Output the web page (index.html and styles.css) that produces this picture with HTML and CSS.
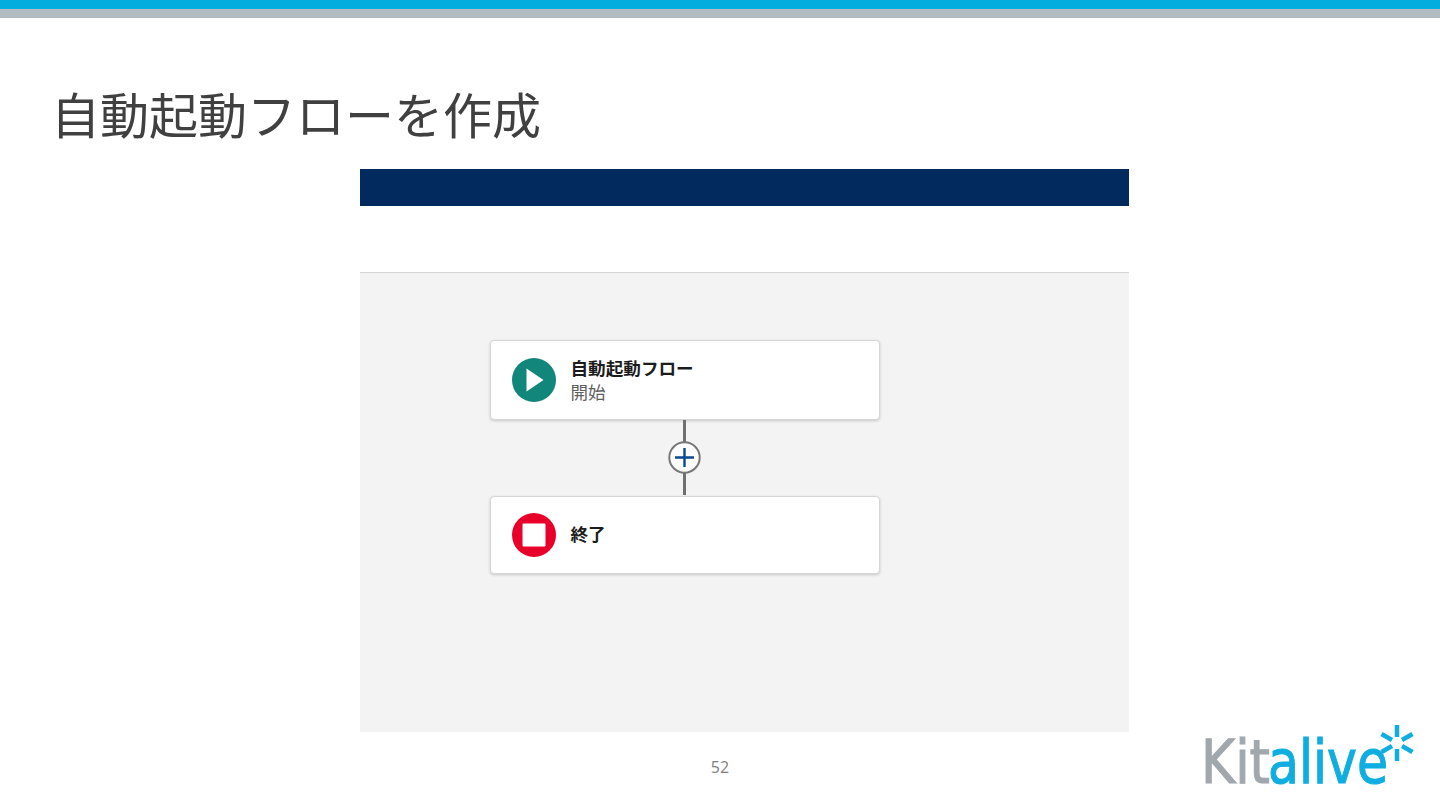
FILE: index.html
```html
<!DOCTYPE html>
<html lang="ja">
<head>
<meta charset="utf-8">
<title>自動起動フローを作成</title>
<link rel="stylesheet" href="styles.css">
</head>
<body>
<div class="slide">
  <div class="bar-blue"></div>
  <div class="bar-gray"></div>
  <h1 class="title">自動起動フローを作成</h1>
  <section class="shot">
    <div class="shot-nav"></div>
    <div class="shot-head"></div>
    <div class="canvas">
      <div class="card card-start">
        <svg class="node-icon" viewBox="0 0 44 44"><circle cx="22" cy="22" r="22" fill="#12867b"/><path d="M14.500 10.500 31.500 22 14.500 33.500z" fill="#fff"/></svg>
        <div class="card-text">
          <div class="card-name">自動起動フロー</div>
          <div class="card-sub">開始</div>
        </div>
      </div>
      <div class="connector">
        <div class="line line-top"></div>
        <svg class="add" viewBox="0 0 33 33"><circle cx="16.500" cy="16.500" r="15.200" fill="#fff" stroke="#777" stroke-width="2"/><path d="M7 16.500h19M16.500 7v19" stroke="#0b4a8f" stroke-width="2.400" fill="none"/></svg>
        <div class="line line-bottom"></div>
      </div>
      <div class="card card-end">
        <svg class="node-icon" viewBox="0 0 44 44"><circle cx="22" cy="22" r="22" fill="#e8002a"/><rect x="10.500" y="10.500" width="23" height="23" rx="1" fill="#fff"/></svg>
        <div class="card-text">
          <div class="card-name card-name-end">終了</div>
        </div>
      </div>
    </div>
  </section>
  <footer class="foot">
    <div class="page-num">52</div>
    <svg class="logo" viewBox="0 0 212 66" role="img" aria-label="Kitalive">
      <text class="logo-kit" x="-1" y="61" textLength="69" lengthAdjust="spacingAndGlyphs">Kit</text>
      <text class="logo-alive" x="66" y="61" textLength="120" lengthAdjust="spacingAndGlyphs">alive</text>
      <path class="logo-star" d="M195 3v12M195 27v12M179.500 12l10.500 6M200 24l10.500 6M179.500 30l10.500-6M200 18l10.500-6"/>
    </svg>
  </footer>
</div>
</body>
</html>
```
FILE: styles.css
```css
* { box-sizing: border-box; }
html, body { margin: 0; padding: 0; background: #fff; }
.slide {
  width: 1440px;
  height: 810px;
  overflow: hidden;
  display: flex;
  flex-direction: column;
  font-family: "Noto Sans CJK JP", "Open Sans", sans-serif;
  background: #fff;
}
.bar-blue { height: 9px; background: #03aede; }
.bar-gray { height: 9px; background: #b1bcc1; }
.title {
  margin: 0;
  height: 151px;
  padding: 65px 0 0 51px;
  font-family: "Liberation Sans", "Noto Sans CJK JP", sans-serif;
  font-weight: 400;
  font-size: 49px;
  line-height: 68px;
  color: #404040;
  white-space: nowrap;
}
.shot {
  width: 769px;
  height: 563px;
  margin-left: 360px;
  display: flex;
  flex-direction: column;
}
.shot-nav { height: 37px; background: #032a5e; }
.shot-head { height: 67px; background: #fff; border-bottom: 1px solid #d4d4d4; }
.canvas {
  flex: 1;
  background: #f3f3f3;
  padding: 67px 0 0 129.500px;
}
.card {
  width: 390px;
  background: #fff;
  border: 1px solid #d6d6d6;
  border-radius: 4px;
  box-shadow: 0 1px 3px rgba(0,0,0,.18);
  display: flex;
  align-items: center;
  padding-left: 21.500px;
}
.card-start { height: 80px; }
.card-end { height: 78px; }
.node-icon { width: 44px; height: 44px; flex: none; margin-top: -1px; }
.card-text { margin-left: 14.500px; }
.card-name {
  font-size: 17.600px;
  line-height: 24px;
  font-weight: 700;
  color: #1c1c1c;
}
.card-name-end { margin-top: -3px; }
.card-sub {
  font-size: 17.500px;
  line-height: 24px;
  color: #5f5f5f;
}
.connector {
  width: 390px;
  height: 76px;
  display: flex;
  flex-direction: column;
  align-items: center;
}
.line { width: 3px; background: #6f6f6f; }
.line-top { height: 22px; }
.line-bottom { height: 22px; }
.add { width: 33px; height: 33px; flex: none; margin: -1px 0 -1px -1px; position: relative; }
.foot {
  flex: 1;
  position: relative;
  display: flex;
  justify-content: center;
  padding-top: 24px;
}
.page-num {
  font-family: "Open Sans", "Liberation Sans", sans-serif;
  font-size: 16px;
  line-height: 22px;
  color: #7f7f7f;
}
.logo {
  position: absolute;
  right: 26px;
  top: -10px;
  width: 212px;
  height: 66px;
}
.logo-kit, .logo-alive {
  font-family: "DejaVu Sans", "Liberation Sans", sans-serif;
  font-size: 60px;
  font-weight: 400;
  stroke-width: 1.200px;
}
.logo-kit { fill: #a0a8ad; stroke: #a0a8ad; }
.logo-alive { fill: #10aee0; stroke: #10aee0; }
.logo-star { stroke: #10aee0; stroke-width: 4.500px; fill: none; }
```
